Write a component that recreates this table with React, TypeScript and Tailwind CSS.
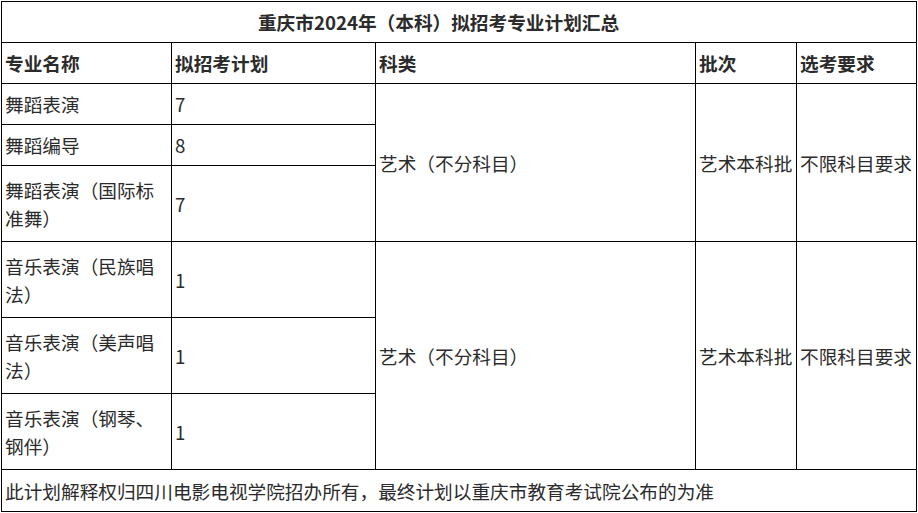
import React from "react";

interface Row {
  name: string;
  plan: string;
}

const groups: Row[][] = [
  [
    { name: "舞蹈表演", plan: "7" },
    { name: "舞蹈编导", plan: "8" },
    { name: "舞蹈表演（国际标准舞）", plan: "7" },
  ],
  [
    { name: "音乐表演（民族唱法）", plan: "1" },
    { name: "音乐表演（美声唱法）", plan: "1" },
    { name: "音乐表演（钢琴、钢伴）", plan: "1" },
  ],
];

const cell = "border border-black px-[3px] py-0 align-middle text-left";

export default function App() {
  return (
    <div className="bg-white pl-[1px] pt-[1px] text-[#2b2b2b] text-[18.67px] leading-[28px] font-['Noto_Sans_CJK_SC','Noto_Sans',sans-serif]">
      <table className="table-fixed border-collapse w-[915px]">
        <colgroup>
          <col className="w-[170px]" />
          <col className="w-[204px]" />
          <col className="w-[320px]" />
          <col className="w-[101px]" />
          <col className="w-[120px]" />
        </colgroup>
        <tbody>
          <tr className="h-[41px]">
            <td colSpan={5} className="border border-black py-0 pl-[3px] pr-[44px] align-middle text-center font-bold">
              重庆市2024年（本科）拟招考专业计划汇总
            </td>
          </tr>
          <tr className="h-[41px] font-bold">
            <td className={cell}>专业名称</td>
            <td className={cell}>拟招考计划</td>
            <td className={cell}>科类</td>
            <td className={cell}>批次</td>
            <td className={cell}>选考要求</td>
          </tr>
          {groups.map((g, gi) =>
            g.map((r, i) => (
              <tr key={`${gi}-${i}`} className={gi === 0 && i < 2 ? "h-[41px]" : "h-[76px]"}>
                <td className={cell}>{r.name}</td>
                <td className={cell}>{r.plan}</td>
                {i === 0 && (
                  <>
                    <td rowSpan={3} className={cell}>
                      艺术（不分科目）
                    </td>
                    <td rowSpan={3} className={cell}>
                      艺术本科批
                    </td>
                    <td rowSpan={3} className={cell}>
                      不限科目要求
                    </td>
                  </>
                )}
              </tr>
            ))
          )}
          <tr className="h-[42px]">
            <td colSpan={5} className={cell}>
              此计划解释权归四川电影电视学院招办所有，最终计划以重庆市教育考试院公布的为准
            </td>
          </tr>
        </tbody>
      </table>
    </div>
  );
}
